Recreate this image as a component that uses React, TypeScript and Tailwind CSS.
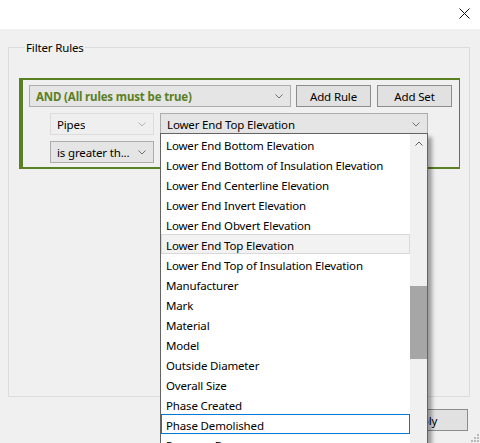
import React from 'react';

const items = [
  'Lower End Bottom Elevation',
  'Lower End Bottom of Insulation Elevation',
  'Lower End Centerline Elevation',
  'Lower End Invert Elevation',
  'Lower End Obvert Elevation',
  'Lower End Top Elevation',
  'Lower End Top of Insulation Elevation',
  'Manufacturer',
  'Mark',
  'Material',
  'Model',
  'Outside Diameter',
  'Overall Size',
  'Phase Created',
  'Phase Demolished',
  'Pressure Drop',
];

const Chevron = ({ color = '#606060', up = false }: { color?: string; up?: boolean }) => (
  <svg width="8" height="5" viewBox="0 0 8 5" className="shrink-0">
    <polyline
      points={up ? '0.5,4.5 4,1 7.5,4.5' : '0.5,0.5 4,4 7.5,0.5'}
      fill="none"
      stroke={color}
      strokeWidth="1"
    />
  </svg>
);

const Combo = ({
  text,
  className,
  disabled = false,
  bold = false,
}: {
  text: string;
  className: string;
  disabled?: boolean;
  bold?: boolean;
}) => (
  <div
    className={`flex h-[22px] items-center justify-between border pl-[6px] pr-[7px] ${
      disabled ? 'border-[#dcdcdc] bg-[#efefef]' : 'border-[#adadad] bg-[#e5e5e5]'
    } ${className}`}
  >
    <span
      className={`truncate pt-[1px] ${bold ? 'font-bold text-[#5b7f24]' : 'text-black'}`}
    >
      {text}
    </span>
    <Chevron color={disabled ? '#b4b4b4' : '#707070'} />
  </div>
);

const Button = ({ label, className = '' }: { label: string; className?: string }) => (
  <button
    className={`flex h-[22px] w-[75px] items-center justify-center border border-[#8c8c8c] bg-[#e1e1e1] pt-[1px] text-black ${className}`}
  >
    {label}
  </button>
);

export default function App() {
  return (
    <div
      className="relative h-[443px] w-[480px] overflow-hidden bg-[#f0f0f0] text-[11.5px] leading-[16px] tracking-[-0.15px] text-black"
      style={{ fontFamily: '"Noto Sans", "Open Sans", sans-serif' }}
    >
      {/* title bar */}
      <div className="flex h-[29px] items-start justify-end bg-white pr-[10px] pt-[8px]">
        <svg width="11" height="11" viewBox="0 0 11 11">
          <path d="M0.5 0.5 L10.5 10.5 M10.5 0.5 L0.5 10.5" stroke="#111" strokeWidth="1" />
        </svg>
      </div>

      {/* filter rules group */}
      <fieldset className="ml-[8px] mr-[10px] mt-[10px] h-[358px] border border-[#dcdcdc] px-[10px] pr-[9px]">
        <legend className="ml-[6px] px-[1px] pt-[1px] leading-[16px]">Filter Rules</legend>

        <div className="mt-[22px] border-y-[2px] border-l-[4px] border-r border-[#5b7f24] pb-[4px] pl-[6px] pr-[6px] pt-[5px]">
          <div className="flex gap-[5px]">
            <Combo text="AND (All rules must be true)" className="w-[262px]" bold />
            <Button label="Add Rule" />
            <Button label="Add Set" className="ml-[1px]" />
          </div>
          <div className="ml-[21px] mt-[6px] flex gap-[6px]">
            <Combo text="Pipes" className="w-[104px]" disabled />
            <Combo text="Lower End Top Elevation" className="w-[268px]" />
          </div>
          <div className="ml-[21px] mt-[6px] flex">
            <Combo text="is greater th..." className="w-[104px]" />
          </div>
        </div>
      </fieldset>

      {/* bottom buttons */}
      <div className="mt-[12px] flex justify-end pr-[12px]">
        <Button label="Apply" className="w-[91px]" />
      </div>

      {/* resize grip */}
      <svg width="10" height="10" viewBox="0 0 10 10" className="absolute bottom-[1px] right-[1px]">
        {[
          [8, 2],
          [5, 5],
          [8, 5],
          [2, 8],
          [5, 8],
          [8, 8],
        ].map(([x, y]) => (
          <rect key={`${x}-${y}`} x={x} y={y} width="2" height="2" fill="#b8b8b8" />
        ))}
      </svg>

      {/* open dropdown list */}
      <div className="absolute left-[160px] top-[133px] flex h-[330px] w-[268px] border border-[#646464] bg-white shadow-[4px_4px_4px_rgba(0,0,0,0.35)]">
        <div className="w-[249px]">
          {items.map((item) => {
            const hot = item === 'Lower End Top Elevation';
            const focus = item === 'Phase Demolished';
            return (
              <div
                key={item}
                className={`flex h-[20px] items-center border pl-[4px] pt-[3px] ${
                  hot
                    ? 'border-[#d9d9d9] bg-[#f2f2f2]'
                    : focus
                      ? 'border-[#0078d7] bg-white'
                      : 'border-transparent'
                }`}
              >
                {item}
              </div>
            );
          })}
        </div>
        <div className="relative w-[17px] bg-[#f0f0f0]">
          <div className="flex h-[17px] items-center justify-center pt-[1px]">
            <Chevron up color="#606060" />
          </div>
          <div className="absolute left-0 top-[152px] h-[73px] w-[17px] bg-[#a6a6a6]" />
        </div>
      </div>
    </div>
  );
}
